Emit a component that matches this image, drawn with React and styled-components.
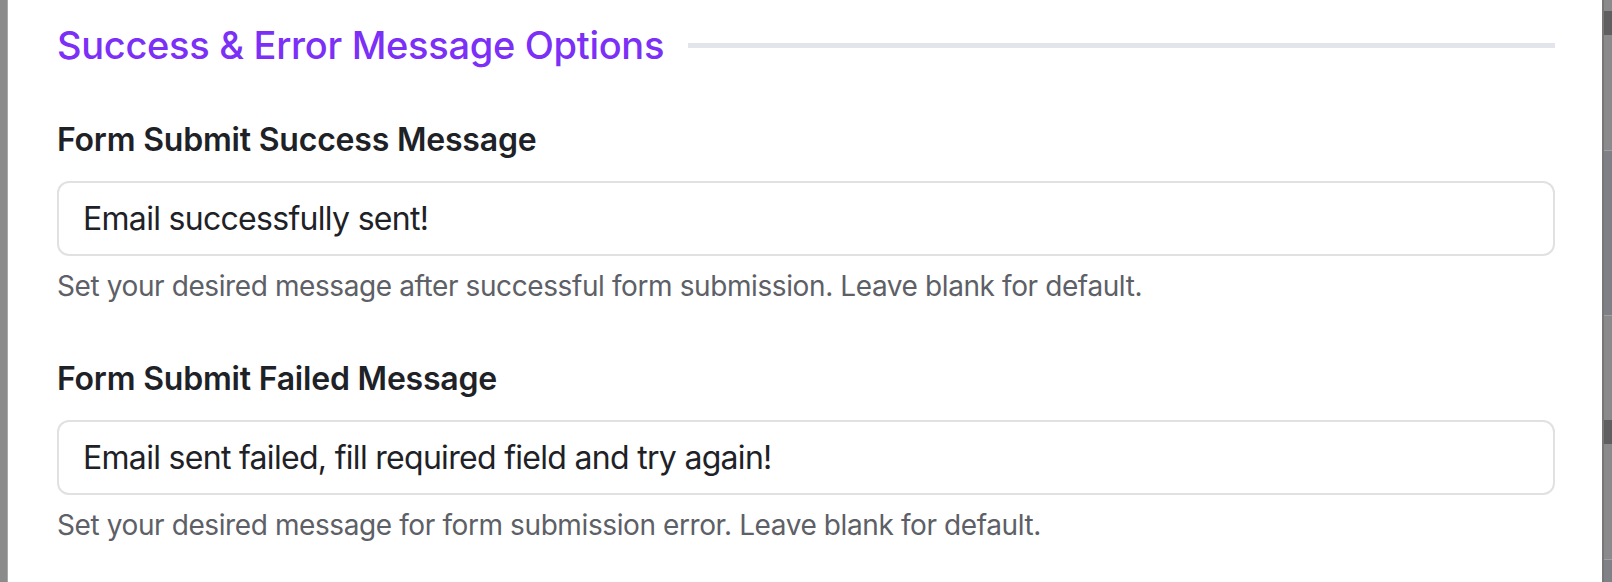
import styled, { createGlobalStyle } from 'styled-components'

const GlobalStyle = createGlobalStyle`
  html, body {
    margin: 0;
    padding: 0;
    background: #ffffff;
  }
  body {
    font-family: Inter, "Noto Sans", "Liberation Sans", sans-serif;
    -webkit-font-smoothing: antialiased;
  }
`

const Screen = styled.div`
  display: flex;
  width: 1612px;
  height: 582px;
  overflow: hidden;
`

const LeftEdge = styled.div`
  width: 7px;
  flex-shrink: 0;
  background: #8b8b8b;
  border-right: 1px solid #a9a9a9;
`

const Panel = styled.div`
  flex: 1;
  background: #ffffff;
  padding: 21px 47px 0 49px;
  box-sizing: border-box;
`

const RightEdge = styled.div`
  width: 10px;
  box-sizing: border-box;
  flex-shrink: 0;
  display: flex;
  flex-direction: column;
  border-left: 2px solid #777779;
  background: #8a8a8c;
`

const EdgeSegment = styled.div`
  height: ${(p) => p.$h}px;
  background: ${(p) => p.$bg || '#8a8a8c'};
  border-bottom: ${(p) => (p.$line ? '1px solid #a0a0a4' : 'none')};
  flex-shrink: 0;
`

const SectionHeader = styled.div`
  display: flex;
  align-items: center;
  gap: 24px;
`

const SectionTitle = styled.h2`
  margin: 0;
  font-size: 38px;
  line-height: 48px;
  font-weight: 500;
  color: #7b2ff7;
  white-space: nowrap;
  letter-spacing: -0.3px;
`

const Divider = styled.div`
  flex: 1;
  height: 5px;
  margin-top: 1px;
  background: #e2e5ea;
`

const Field = styled.div`
  display: flex;
  flex-direction: column;
  margin-top: ${(p) => p.$top}px;
`

const Label = styled.label`
  font-size: 32px;
  line-height: 40px;
  font-weight: 600;
  color: #1e2227;
  letter-spacing: -0.2px;
`

const TextInput = styled.input`
  margin-top: 21px;
  height: 75px;
  box-sizing: border-box;
  border: 2px solid #e1e1e4;
  border-radius: 12px;
  padding: 0 24px;
  font-family: Inter, "Noto Sans", "Liberation Sans", sans-serif;
  font-size: 32px;
  color: #1e2227;
  background: #ffffff;
  outline: none;
  letter-spacing: -0.7px;
`

const Help = styled.p`
  margin: 12px 0 0;
  font-size: 28px;
  line-height: 36px;
  color: #5d6066;
  letter-spacing: -0.4px;
`

function MessageField({ top, label, value, help }) {
  return (
    <Field $top={top}>
      <Label>{label}</Label>
      <TextInput defaultValue={value} />
      <Help>{help}</Help>
    </Field>
  )
}

export default function App() {
  return (
    <>
      <GlobalStyle />
      <Screen>
        <LeftEdge />
        <Panel>
          <SectionHeader>
            <SectionTitle>Success &amp; Error Message Options</SectionTitle>
            <Divider />
          </SectionHeader>
          <MessageField
            top={51}
            label="Form Submit Success Message"
            value="Email successfully sent!"
            help="Set your desired message after successful form submission. Leave blank for default."
          />
          <MessageField
            top={55}
            label="Form Submit Failed Message"
            value="Email sent failed, fill required field and try again!"
            help="Set your desired message for form submission error. Leave blank for default."
          />
        </Panel>
        <RightEdge>
          <EdgeSegment $h={11} />
          <EdgeSegment $h={24} $bg="#5f5f62" />
          <EdgeSegment $h={115} $line />
          <EdgeSegment $h={164} $bg="#7f7f86" $line />
          <EdgeSegment $h={104} />
          <EdgeSegment $h={24} $bg="#5f5f62" />
          <EdgeSegment $h={115} $line />
          <EdgeSegment $h={25} $bg="#808087" />
        </RightEdge>
      </Screen>
    </>
  )
}
